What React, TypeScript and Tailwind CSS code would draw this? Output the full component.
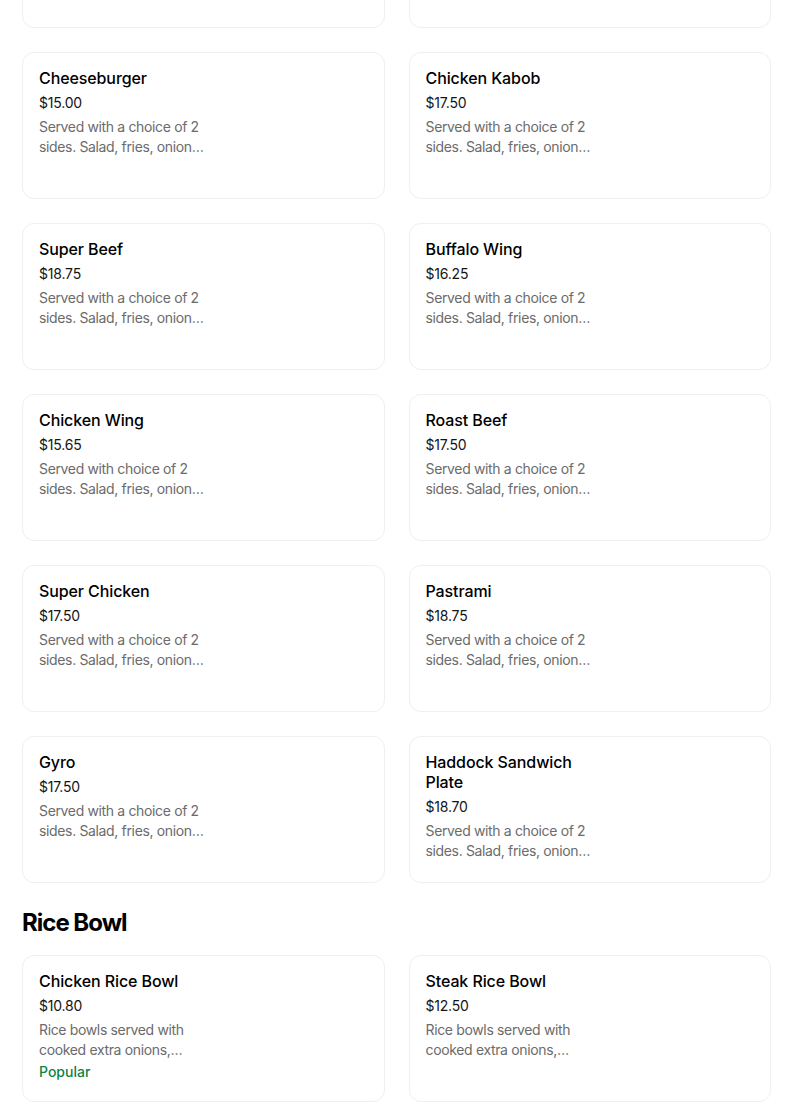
type Item = { name: string; price: string; desc: string; popular?: boolean };

const sides = "Served with a choice of 2 sides. Salad, fries, onion rings or rice.";
const rice = "Rice bowls served with cooked extra onions, peppers and choice of sauce.";

const platters: Item[] = [
  { name: "Hamburger", price: "$14.00", desc: sides },
  { name: "Steak Tip", price: "$19.50", desc: sides },
  { name: "Cheeseburger", price: "$15.00", desc: sides },
  { name: "Chicken Kabob", price: "$17.50", desc: sides },
  { name: "Super Beef", price: "$18.75", desc: sides },
  { name: "Buffalo Wing", price: "$16.25", desc: sides },
  { name: "Chicken Wing", price: "$15.65", desc: "Served with choice of 2 sides. Salad, fries, onion rings or rice." },
  { name: "Roast Beef", price: "$17.50", desc: sides },
  { name: "Super Chicken", price: "$17.50", desc: sides },
  { name: "Pastrami", price: "$18.75", desc: sides },
  { name: "Gyro", price: "$17.50", desc: sides },
  { name: "Haddock Sandwich Plate", price: "$18.70", desc: sides },
];

const bowls: Item[] = [
  { name: "Chicken Rice Bowl", price: "$10.80", desc: rice, popular: true },
  { name: "Steak Rice Bowl", price: "$12.50", desc: rice },
];

function Card({ item }: { item: Item }) {
  return (
    <div className="h-[147px] rounded-xl border border-[#efefef] bg-white px-4 pt-[15px]">
      <div className="w-[170px]">
        <div className="text-[16px] font-medium leading-5 tracking-[-0.1px] text-black">{item.name}</div>
        <div className="mt-[5px] text-[14px] leading-5 tracking-[-0.2px] text-[#141414]">{item.price}</div>
        <div className="mt-1 line-clamp-2 text-[14px] leading-5 tracking-[-0.35px] text-[#6b6b6b]">
          {item.desc}
        </div>
        {item.popular && (
          <div className="mt-[2px] text-[14px] font-medium leading-5 text-[#0e8345]">Popular</div>
        )}
      </div>
    </div>
  );
}

export default function App() {
  return (
    <div
      className="h-[1119px] w-[804px] overflow-hidden bg-white"
      style={{ fontFamily: "Inter, 'Noto Sans', sans-serif" }}
    >
      <div className="-mt-[119px] w-[771px] pl-[22px]">
        <div className="grid grid-cols-2 gap-x-6 gap-y-6">
          {platters.map((it) => (
            <Card key={it.name} item={it} />
          ))}
        </div>
        <h2 className="mt-6 mb-4 text-[24px] font-bold leading-8 tracking-[-1px] text-black">
          Rice Bowl
        </h2>
        <div className="grid grid-cols-2 gap-x-6 gap-y-6">
          {bowls.map((it) => (
            <Card key={it.name} item={it} />
          ))}
        </div>
      </div>
    </div>
  );
}
